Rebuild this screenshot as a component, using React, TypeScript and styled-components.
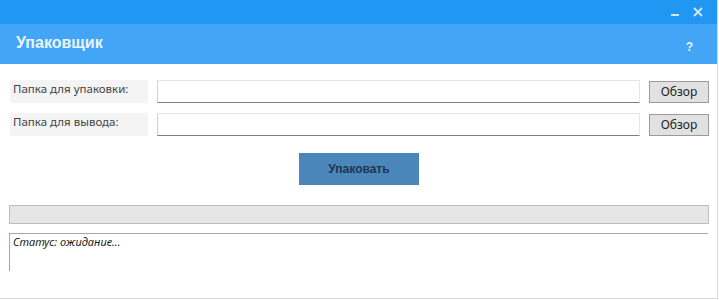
import React from "react";
import styled, { createGlobalStyle } from "styled-components";

const Global = createGlobalStyle`
  html, body { margin: 0; padding: 0; background: #ffffff; }
  body { font-family: "Noto Sans", "Open Sans", sans-serif; }
  * { box-sizing: border-box; }
`;

const Window = styled.div`
  width: 718px;
  height: 299px;
  border-right: 1px solid #dcdcdc;
  border-bottom: 1px solid #dcdcdc;
  display: flex;
  flex-direction: column;
  background: #ffffff;
`;

const TopBar = styled.div`
  height: 24px;
  background: #2196f3;
  display: flex;
  justify-content: flex-end;
  align-items: center;
  padding-right: 14px;
  gap: 13px;
`;

const WinIcon = styled.svg`
  display: block;
`;

const Header = styled.div`
  height: 40px;
  background: #42a5f5;
  display: flex;
  align-items: center;
  justify-content: space-between;
  padding: 0 24px 0 16px;
`;

const Title = styled.div`
  font-family: "Liberation Sans", "Noto Sans", sans-serif;
  font-weight: bold;
  font-size: 16px;
  color: #e8f4fe;
  margin-top: -2px;
`;

const Help = styled.div`
  font-family: "Liberation Sans", sans-serif;
  font-weight: bold;
  font-size: 12px;
  color: #e8f4fe;
  margin-top: 6px;
`;

const Body = styled.div`
  padding: 16px 8px 0 10px;
  display: flex;
  flex-direction: column;
  align-items: flex-start;
`;

const Row = styled.div`
  display: flex;
  align-items: center;
  gap: 9px;
  height: 23px;
  margin-bottom: 10px;
`;

const Label = styled.div`
  flex: 0 0 138px;
  height: 23px;
  background: #f4f4f4;
  font-size: 11.5px;
  color: #444;
  padding: 1px 0 0 3px;
  line-height: 16px;
`;

const Input = styled.div`
  flex: 0 0 483px;
  height: 23px;
  background: #fff;
  border: 1px solid #e6e6e6;
  border-bottom: 1px solid #7e7e7e;
  border-left-color: #d0d0d0;
`;

const Browse = styled.button`
  flex: 0 0 60px;
  height: 22px;
  margin-top: 1px;
  background: #e1e1e1;
  border: 1px solid #9a9a9a;
  font-family: "Noto Sans", sans-serif;
  font-size: 12px;
  color: #222;
  padding: 0;
  line-height: 18px;
`;

const Center = styled.div`
  align-self: stretch;
  display: flex;
  justify-content: center;
  margin-top: 7px;
  padding-right: 1px;
`;

const PackButton = styled.button`
  width: 120px;
  height: 32px;
  background: #4a86b9;
  border: none;
  font-family: "Liberation Sans", sans-serif;
  font-weight: bold;
  font-size: 12px;
  color: #1c3553;
  padding: 0;
`;

const Progress = styled.div`
  margin-top: 20px;
  width: 700px;
  height: 19px;
  background: #e6e6e6;
  border: 1px solid #bdbdbd;
  margin-left: -1px;
`;

const Status = styled.div`
  margin-top: 9px;
  margin-left: -1px;
  width: 699px;
  height: 38px;
  border-top: 1px solid #a8a8a8;
  border-left: 1px solid #a8a8a8;
  font-size: 11px;
  font-style: italic;
  color: #1a1a1a;
  padding: 1px 0 0 3px;
  line-height: 14px;
`;

export default function App() {
  return (
    <>
      <Global />
      <Window>
        <TopBar>
          <WinIcon width="10" height="10" viewBox="0 0 10 10">
            <rect x="1" y="7" width="8" height="2" fill="#cfe8fd" />
          </WinIcon>
          <WinIcon width="10" height="10" viewBox="0 0 10 10">
            <path d="M1 1 L9 9 M9 1 L1 9" stroke="#cfe8fd" strokeWidth="1.8" />
          </WinIcon>
        </TopBar>
        <Header>
          <Title>Упаковщик</Title>
          <Help>?</Help>
        </Header>
        <Body>
          <Row>
            <Label>Папка для упаковки:</Label>
            <Input />
            <Browse>Обзор</Browse>
          </Row>
          <Row>
            <Label>Папка для вывода:</Label>
            <Input />
            <Browse>Обзор</Browse>
          </Row>
          <Center>
            <PackButton>Упаковать</PackButton>
          </Center>
          <Progress />
          <Status>Статус: ожидание...</Status>
        </Body>
      </Window>
    </>
  );
}
